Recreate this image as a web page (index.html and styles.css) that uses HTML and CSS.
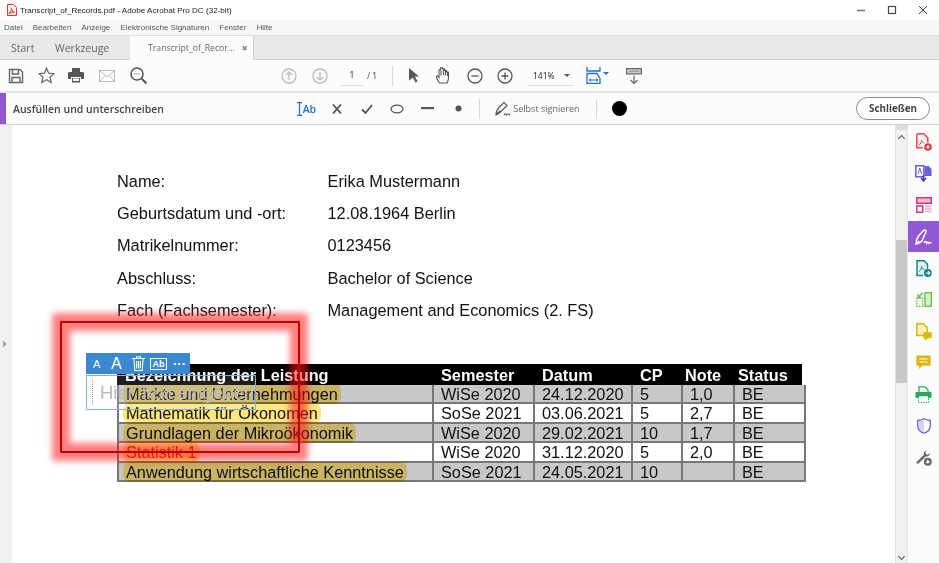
FILE: index.html
```html
<!DOCTYPE html>
<html lang="de">
<head>
    <meta charset="UTF-8">
    <title>Transcript_of_Records.pdf - Adobe Acrobat Pro DC (32-bit)</title>
    <link rel="stylesheet" href="styles.css">
</head>
<body>
    <div class="titlebar">
        <svg class="app-icon" width="11" height="12" viewBox="0 0 11 12"><path d="M1.500 .5h6l3 3v8h-9z" fill="#fdeeee" stroke="#e4342c"/><path d="M2.800 9.600c1.600-.8 2.600-3 2.600-5 .4 2 1.200 3 3 3.500-2 0-3.800.5-5.600 1.500z" fill="none" stroke="#e4342c"/></svg>
        <span class="title-text">Transcript_of_Records.pdf - Adobe Acrobat Pro DC (32-bit)</span>
        <div class="win-btns">
            <svg width="10" height="10" viewBox="0 0 10 10"><path d="M1 5.500h8" stroke="#777" stroke-width="1.500"/></svg>
            <svg width="10" height="10" viewBox="0 0 10 10"><rect x="1.500" y="1.500" width="7" height="7" fill="none" stroke="#444" stroke-width="1.200"/></svg>
            <svg width="10" height="10" viewBox="0 0 10 10"><path d="M1 1l8 8M9 1l-8 8" stroke="#444"/></svg>
        </div>
    </div>

    <div class="menubar">
        <span>Datei</span><span>Bearbeiten</span><span>Anzeige</span><span>Elektronische Signaturen</span><span>Fenster</span><span>Hilfe</span>
    </div>

    <div class="tabbar">
        <div class="tab">Start</div>
        <div class="tab tab-tools">Werkzeuge</div>
        <div class="tab tab-active">Transcript_of_Recor... <span class="tab-close">×</span></div>
    </div>

    <div class="toolbar">
        <div class="tool"><svg width="16" height="16" viewBox="0 0 16 16" fill="none" stroke="#666" stroke-width="1.400"><path d="M1.500 1.500h10.500l2.500 2.500v10.500h-13z"/><path d="M4.500 2v4h6v-4M4 14.500v-5h8v5"/></svg></div>
        <div class="tool"><svg width="17" height="17" viewBox="0 0 17 17" fill="none" stroke="#666" stroke-width="1.200"><path d="M8.500 1.200l2.200 5 5.300.5-4 3.500 1.200 5.300-4.700-2.800-4.700 2.800 1.200-5.300-4-3.500 5.300-.5z"/></svg></div>
        <div class="tool"><svg width="16" height="15" viewBox="0 0 16 15"><path d="M4 0h8v4h-8z" fill="#555"/><path d="M1.500 4h13c.8 0 1.500.7 1.500 1.500v5.500h-3v-2h-10v2h-3v-5.500c0-.8.7-1.500 1.500-1.500z" fill="#555"/><path d="M4 10h8v4.500h-8z" fill="#555"/><path d="M5 10.500h6v2.500h-6z" fill="#fff"/></svg></div>
        <div class="tool tool-mail"><svg width="16" height="12" viewBox="0 0 16 12" fill="none" stroke="#bbb"><rect x=".5" y=".5" width="15" height="11"/><path d="M1 1l7 6 7-6M1 11l5-5.500M15 11l-5-5.500"/></svg></div>
        <div class="tool tool-find"><svg width="17" height="17" viewBox="0 0 17 17" fill="none" stroke="#555" stroke-width="1.500"><circle cx="7" cy="7" r="6"/><path d="M11.500 11.500l5 5" stroke-width="2"/><path d="M4.500 7h1M6.500 7h1M8.500 7h1" stroke-width="1"/></svg></div>

        <div class="tool tool-first-nav"><svg width="16" height="16" viewBox="0 0 16 16" fill="none" stroke="#bbb" stroke-width="1.300"><circle cx="8" cy="8" r="7"/><path d="M8 12v-8M4.800 7l3.200-3.200 3.200 3.200"/></svg></div>
        <div class="tool tool-next-nav"><svg width="16" height="16" viewBox="0 0 16 16" fill="none" stroke="#bbb" stroke-width="1.300"><circle cx="8" cy="8" r="7"/><path d="M8 4v8M4.800 9l3.200 3.200 3.200-3.200"/></svg></div>
        <div class="page-input">1</div>
        <div class="page-total">/ 1</div>
        <div class="sep"></div>
        <div class="tool tool-pointer"><svg width="12" height="15" viewBox="0 0 12 15"><path d="M1 0l10 8.500h-4l2.500 5-2 1-2.500-5-4 3z" fill="#555"/></svg></div>
        <div class="tool"><svg width="16" height="17" viewBox="0 0 16 17" fill="none" stroke="#555" stroke-width="1.100"><path d="M3.500 16c-1-2-3-4-3-6s1.500-1 2.500.5v-7c0-1.200 1.500-1.200 1.500 0v-2c0-1.200 2-1.200 2 0v1c0-1.200 2-1.200 2 0v1.500c0-1.200 2-1.200 2 0v1.500c0-1 2-1 2 0v5.500c0 2-1 3.500-1.500 5z"/><path d="M5 3.500v5M7.500 2.500v5.500M9.500 3.500v5M11.500 5v4"/></svg></div>
        <div class="tool tool-minus"><svg width="16" height="16" viewBox="0 0 16 16" fill="none" stroke="#555" stroke-width="1.300"><circle cx="8" cy="8" r="7"/><path d="M4.500 8h7"/></svg></div>
        <div class="tool"><svg width="16" height="16" viewBox="0 0 16 16" fill="none" stroke="#555" stroke-width="1.300"><circle cx="8" cy="8" r="7"/><path d="M4.500 8h7M8 4.500v7"/></svg></div>
        <div class="zoom-select">141% <span class="caret"></span></div>
        <div class="tool tool-fit"><svg width="23" height="17" viewBox="0 0 23 17" fill="none" stroke="#1f73c9" stroke-width="1.300"><path d="M1 0v4h13v-4M1 6.500v10h13v-5l-3-5z"/><path d="M3 13h9M3 13l2-1.500M3 13l2 1.500M12 13l-2-1.500M12 13l-2 1.500" stroke-width="1"/><path d="M17 5h6l-3 3z" fill="#1f73c9" stroke="none"/></svg></div>
        <div class="tool tool-last"><svg width="16" height="16" viewBox="0 0 16 16" fill="none" stroke="#666" stroke-width="1.200"><rect x=".6" y=".6" width="14.800" height="5.300" fill="#ccc"/><path d="M3.500 3.200h9" stroke-dasharray="1 1"/><path d="M8 7.500v8M4.500 12l3.500 3.500 3.500-3.500"/></svg></div>
    </div>

    <div class="fillbar">
        <div class="fill-mark"></div>
        <div class="fill-title">Ausfüllen und unterschreiben</div>
        <div class="fill-tools">
            <div class="fill-tool fill-text"><svg width="5" height="14" viewBox="0 0 5 14" fill="none" stroke="#1f73c9" stroke-width="1.200"><path d="M0 .6h5M0 13.400h5M2.500 .6v12.800"/></svg><span>Ab</span></div>
            <div class="fill-tool"><svg width="10" height="10" viewBox="0 0 10 10"><path d="M1 .5l8 9M9 .5l-8 9" stroke="#555" stroke-width="1.800"/></svg></div>
            <div class="fill-tool"><svg width="12" height="10" viewBox="0 0 12 10"><path d="M1 5.500l3.500 3.500 6.500-8" fill="none" stroke="#555" stroke-width="1.800"/></svg></div>
            <div class="fill-tool"><svg width="14" height="10" viewBox="0 0 14 10"><ellipse cx="7" cy="5" rx="6" ry="3.900" fill="none" stroke="#555" stroke-width="1.200"/></svg></div>
            <div class="fill-tool"><svg width="13" height="3" viewBox="0 0 13 3"><rect width="13" height="2.200" fill="#555"/></svg></div>
            <div class="fill-tool"><svg width="7" height="7" viewBox="0 0 7 7"><circle cx="3.500" cy="3.500" r="3" fill="#555"/></svg></div>
        </div>
        <div class="sep sep-first"></div>
        <svg class="sign-icon" width="16" height="15" viewBox="0 0 16 15" fill="none" stroke="#555" stroke-width="1.100"><path d="M1 14c0-3 1.500-6 3-7.500l5-5 3 3-5 5c-1.500 1.500-3 3-6 4.500zM1 14l4-4"/><path d="M9 14c1-1.500 2-1.500 2.500 0 .5-1 2-1.500 3.500 0"/></svg>
        <span class="sign-label">Selbst signieren</span>
        <div class="sep sep-second"></div>
        <div class="color-dot"></div>
        <button class="close-btn">Schließen</button>
    </div>

    <div class="main">
        <div class="left-strip"><span class="strip-arrow"></span></div>

        <div class="doc">
            <div class="info-rows">
                <div class="info-row"><span class="info-key">Name:</span><span>Erika Mustermann</span></div>
                <div class="info-row"><span class="info-key">Geburtsdatum und -ort:</span><span>12.08.1964 Berlin</span></div>
                <div class="info-row"><span class="info-key">Matrikelnummer:</span><span>0123456</span></div>
                <div class="info-row"><span class="info-key">Abschluss:</span><span>Bachelor of Science</span></div>
                <div class="info-row"><span class="info-key">Fach (Fachsemester):</span><span>Management and Economics (2. FS)</span></div>
            </div>

            <div class="grades">
                <div class="grades-head">
                    <span>Bezeichnung der Leistung</span><span>Semester</span><span>Datum</span><span>CP</span><span class="note-h">Note</span><span class="status-h">Status</span>
                </div>
                <div class="grade-row shaded">
                    <span><mark>Märkte und Unternehmungen</mark></span><span>WiSe 2020</span><span>24.12.2020</span><span>5</span><span class="note">1,0</span><span class="status">BE</span>
                </div>
                <div class="grade-row">
                    <span><mark>Mathematik für Ökonomen</mark></span><span>SoSe 2021</span><span>03.06.2021</span><span>5</span><span class="note">2,7</span><span class="status">BE</span>
                </div>
                <div class="grade-row shaded">
                    <span><mark>Grundlagen der Mikroökonomik</mark></span><span>WiSe 2020</span><span>29.02.2021</span><span class="cp-wide">10</span><span class="note">1,7</span><span class="status">BE</span>
                </div>
                <div class="grade-row">
                    <span><mark class="failed">Statistik 1</mark></span><span>WiSe 2020</span><span>31.12.2020</span><span>5</span><span class="note">2,0</span><span class="status">BE</span>
                </div>
                <div class="grade-row shaded">
                    <span><mark>Anwendung wirtschaftliche Kenntnisse</mark></span><span>SoSe 2021</span><span>24.05.2021</span><span class="cp-wide">10</span><span class="note"></span><span class="status">BE</span>
                </div>
            </div>

            <!-- text field being edited, lies over the table -->
            <div class="field-bar">
                <span class="fb-small">A</span>
                <span class="fb-big">A</span>
                <svg class="fb-trash" width="13" height="15" viewBox="0 0 13 15" fill="none" stroke="#fff" stroke-width="1.100"><path d="M0 2.500h13M4.500 2.500v-1.800h4v1.800M2 3l.8 11.500h7.400l.8-11.500M4.700 5v7.500M6.500 5v7.500M8.300 5v7.500"/></svg>
                <span class="fb-ab">Ab</span>
                <span class="fb-more">···</span>
            </div>
            <div class="field-box">
                <span class="field-caret"></span>
                <span class="field-hint">Hier Text eingeben</span>
            </div>

            <div class="red-frame"></div>
        </div>

        <div class="scrollbar">
            <div class="sb-stub"></div>
            <div class="sb-up"></div>
            <div class="sb-thumb"></div>
            <div class="sb-down"></div>
        </div>

        <div class="tools-panel">
            <div class="panel-tool"><svg width="16" height="18" viewBox="0 0 16 18" fill="none" stroke="#d9534f" stroke-width="1.500"><path d="M.8 .8h7l4 4v5M.8 .8v14h6" fill="#fbe3e3"/><path d="M3 12c1.500-.8 2.500-3 2.500-5 .4 2 1 2.500 3 3" stroke-width="1"/><circle cx="12" cy="14" r="3.800" fill="#d9363e" stroke="none"/><path d="M12 12v4M10 14h4" stroke="#fff" stroke-width="1.200"/></svg></div>
            <div class="panel-tool"><svg width="17" height="17" viewBox="0 0 17 17"><path d="M.8 .8h8v11h-8z" fill="#fff" stroke="#6a5fe0" stroke-width="1.500"/><path d="M9.500 1h4l3 3v7h-7z" fill="#6a5fe0"/><path d="M3 9l1.800-6 1.800 6" fill="none" stroke="#6a5fe0"/><path d="M8.500 10v5.500M6 13l2.500 3 2.500-3" fill="none" stroke="#3f35c9" stroke-width="1.500"/></svg></div>
            <div class="panel-tool"><svg width="16" height="16" viewBox="0 0 16 16" fill="none" stroke="#d6337f" stroke-width="1.500"><rect x=".7" y=".7" width="14.600" height="5.600" fill="#f4b8d2"/><rect x=".7" y="9" width="6" height="6.300"/><path d="M9 9.500h6.500M9 12h6.500M9 14.500h6.500" stroke="#f0a8c8"/></svg></div>
            <div class="panel-tool panel-active"><svg width="18" height="16" viewBox="0 0 18 16" fill="none" stroke="#fff" stroke-width="1.500"><path d="M1 15c0-3 1-6 2.500-8l5-5.500c1-1 3-.2 2.500 1.300l-3.500 8c-1 2-3.500 3.500-6.500 4.200zM1 15l3-3"/><path d="M9 14c1-2 2-2 2.500 0 .5-1.500 1.500-1.500 2 0 .5-.8 1.500-.8 3 0"/></svg></div>
            <div class="panel-tool"><svg width="16" height="17" viewBox="0 0 16 17" fill="none" stroke="#17828c" stroke-width="1.500"><path d="M7 15.500h-6v-14.700h7l3.500 3.500v4.500" fill="#dff1f2"/><path d="M3 11.500c1.500-.8 2.500-3 2.500-5 .4 2 1 2.500 3 3" stroke-width="1"/><circle cx="11.800" cy="13" r="3.900" fill="#17828c" stroke="none"/><path d="M9.800 13h3.800M12 11.200l1.800 1.800-1.800 1.800" stroke="#fff" stroke-width="1.100"/></svg></div>
            <div class="panel-tool"><svg width="16" height="15" viewBox="0 0 16 15" fill="none" stroke="#6cc24a" stroke-width="1.400"><rect x="9" y=".7" width="6.300" height="13.600" fill="#d7efc9"/><path d="M.7 6.500h6v7.800h-6z" stroke-dasharray="1.500 1.200"/><path d="M7 .8l-5 4.500M2 2v3.500h3.500"/></svg></div>
            <div class="panel-tool"><svg width="16" height="17" viewBox="0 0 16 17" fill="none" stroke="#dcb712" stroke-width="1.500"><path d="M.8 .8h6.500l4 4v7.700h-10.500z" fill="#f7eebb"/><rect x="8" y="10" width="7" height="4.500" fill="#dcb712"/><path d="M9.500 14.500v2l2-2" fill="#dcb712"/></svg></div>
            <div class="panel-tool"><svg width="15" height="15" viewBox="0 0 15 15"><path d="M1 .5h13c.4 0 .7 .3 .7 .7v8.800c0 .4-.3 .7-.7 .7h-8l-3 3.500v-3.500h-2c-.4 0-.7-.3-.7-.7v-8.800c0-.4 .3-.7 .7-.7z" fill="#dcb712"/><path d="M3.500 4h8M3.500 7h8" stroke="#fff" stroke-width="1.200"/></svg></div>
            <div class="panel-tool"><svg width="17" height="17" viewBox="0 0 17 17"><path d="M4 .8h6l3 3v3.500h-9z" fill="#fff" stroke="#24a85a" stroke-width="1.300"/><rect x=".5" y="6" width="16" height="6" rx="1" fill="#24a85a"/><rect x="3.500" y="10" width="10" height="6.300" fill="#fff" stroke="#24a85a" stroke-dasharray="1.500 1"/></svg></div>
            <div class="panel-tool"><svg width="14" height="16" viewBox="0 0 14 16" stroke="#5f57e3" stroke-width="1.300"><path d="M7 .8c2 1.200 4 1.700 6.200 1.700v5.500c0 3.500-2.800 6-6.200 7.200-3.400-1.200-6.200-3.700-6.200-7.200v-5.500c2.200 0 4.200-.5 6.200-1.700z" fill="#fff"/><path d="M7 1.500v13c-3-1.200-5.500-3.500-5.500-6.500v-4.800c2 0 3.700-.5 5.500-1.700z" fill="#d5d3f7" stroke="none"/></svg></div>
            <div class="panel-tool"><svg width="16" height="16" viewBox="0 0 16 16"><path d="M11 .5c-2.200 0-3.800 2-3 4.200l-7.200 7c-1 1 .6 2.700 1.700 1.700l7.200-7c2.200 .8 4.300-1 4.100-3.400l-2.100 1.700-2-.6-.3-2z" fill="#666"/><circle cx="11.800" cy="11.800" r="4" fill="#666"/><path d="M11.800 9.800v4M9.800 11.800h4" stroke="#fff" stroke-width="1.200"/></svg></div>
        </div>
    </div>
</body>
</html>
```

FILE: styles.css
```css
* {
    box-sizing: border-box;
}

html, body {
    margin: 0;
    height: 100%;
}

body {
    width: 939px;
    height: 563px;
    overflow: hidden;
    display: flex;
    flex-direction: column;
    font-family: "Noto Sans", sans-serif;
    color: #333;
    background: #fff;
}

svg {
    display: block;
    flex: none;
}

/* window chrome */
.titlebar {
    height: 20px;
    display: flex;
    align-items: center;
    padding-left: 6px;
    background: #fff;
    font-family: "Liberation Sans", sans-serif;
    font-size: 8.100px;
    color: #222;
}

.app-icon {
    margin-right: 3px;
}

.win-btns {
    margin-left: auto;
    display: flex;
    gap: 21px;
    padding-right: 11px;
    margin-top: -1px;
}

.menubar {
    height: 15px;
    display: flex;
    align-items: center;
    gap: 10px;
    padding-left: 4px;
    background: #f8f8f8;
    font-family: "Liberation Sans", sans-serif;
    font-size: 8px;
    color: #555;
}

.tabbar {
    height: 25px;
    display: flex;
    background: #e8e8e8;
    border-top: 1px solid #dcdcdc;
    border-bottom: 1px solid #d2d2d2;
    font-family: "Open Sans", sans-serif;
    font-size: 10.500px;
    color: #666;
}

.tab {
    display: flex;
    align-items: center;
    padding-left: 11px;
    width: 44px;
}

.tab-tools {
    padding-left: 11px;
    width: 86px;
}

.tab-active {
    width: 124px;
    margin-bottom: -1px;
    padding-left: 18px;
    background: #fcfcfc;
    border-right: 1px solid #d2d2d2;
    font-size: 8.700px;
}

.tab-close {
    margin-left: 7px;
    font-weight: 700;
    font-size: 10px;
}

.toolbar {
    height: 33px;
    display: flex;
    align-items: center;
    padding-left: 1px;
    background: #fcfcfc;
    border-bottom: 2px solid #e4e4e4;
}

.tool {
    width: 30px;
    height: 30px;
    display: flex;
    align-items: center;
    justify-content: center;
}

.tool-mail,
.tool-find,
.tool-next-nav,
.tool-minus {
    margin-left: 1px;
}

.tool-first-nav {
    margin-left: 121px;
}

.page-input {
    width: 22px;
    margin-left: 6px;
    height: 20px;
    line-height: 17px;
    text-align: center;
    font-size: 8.500px;
    border-bottom: 1px solid #ddd;
}

.page-total {
    margin-left: 4px;
    width: 25px;
    font-size: 8.500px;
    color: #555;
}

.sep {
    width: 1px;
    height: 20px;
    background: #d8d8d8;
}

.tool-pointer {
    margin-left: 6px;
}

.zoom-select {
    width: 47px;
    height: 20px;
    line-height: 17px;
    margin-left: 7px;
    padding-left: 6px;
    font-size: 8.500px;
    border-bottom: 1px solid #ddd;
    display: flex;
    align-items: center;
    gap: 9px;
}

.caret {
    border: 3px solid transparent;
    border-top-color: #555;
    margin-top: 3px;
}

.tool-fit {
    margin-left: 6px;
    padding-left: 4px;
}

.tool-last {
    margin-left: 9px;
}

/* fill & sign bar */
.fillbar {
    height: 32px;
    display: flex;
    align-items: center;
    background: #fcfcfc;
    border-bottom: 1px solid #d2d2d2;
}

.fill-mark {
    width: 6px;
    height: 100%;
    background: #9257d3;
}

.fill-title {
    width: 278px;
    margin-left: 7px;
    font-family: "Open Sans", sans-serif;
    font-weight: 600;
    font-size: 10.500px;
    color: #444;
}

.fill-tools {
    display: flex;
    align-items: center;
}

.fill-tool {
    width: 30.400px;
    display: flex;
    align-items: center;
    justify-content: center;
}

.fill-text {
    gap: 1px;
    font-family: "Open Sans", sans-serif;
    font-weight: 600;
    font-size: 10.500px;
    letter-spacing: -0.3px;
    color: #1f73c9;
}

.sep-first {
    margin-left: 6px;
}

.sign-icon {
    margin-left: 15px;
}

.sign-label {
    margin-left: 2px;
    width: 67px;
    white-space: nowrap;
    font-family: "Open Sans", sans-serif;
    font-size: 9px;
    color: #666;
}

.sep-second {
    margin-left: 16px;
}

.color-dot {
    width: 15px;
    height: 15px;
    margin-left: 15px;
    border-radius: 50%;
    background: #000;
}

.close-btn {
    width: 74px;
    height: 23px;
    margin-left: auto;
    margin-right: 9px;
    padding: 0;
    border: 1px solid #888;
    border-radius: 12px;
    background: #fff;
    font-family: "Open Sans", sans-serif;
    font-weight: 700;
    font-size: 9.800px;
    color: #444;
}

/* document area */
.main {
    flex: 1;
    display: flex;
    min-height: 0;
}

.left-strip {
    width: 12px;
    background: #f0f0f0;
    display: flex;
    align-items: center;
    padding-left: 3px;
    padding-bottom: 1px;
}

.strip-arrow {
    border: 4px solid transparent;
    border-left-color: #aaa;
    border-right-width: 0;
    margin-top: 1px;
}

.doc {
    flex: 1;
    position: relative;
    padding: 40.200px 0 0 105px;
    background: #fff;
    font-family: "Liberation Sans", sans-serif;
    color: #111;
}

.info-row {
    height: 32.250px;
    display: flex;
    align-items: center;
    font-size: 16.350px;
}

.info-key {
    width: 210.500px;
}

.grades {
    margin-top: 37.300px;
    width: 689px;
    font-size: 16.300px;
}

.grades-head,
.grade-row {
    display: grid;
    grid-template-columns: 315px 101px 98px 50px 52px 73px;
}

.grades-head {
    width: 685px;
    height: 21px;
    background: #000;
    color: #fff;
    font-weight: 700;
    line-height: 22px;
}

.grades-head span {
    padding-left: 8px;
}

.grades-head span:nth-child(2),
.grades-head span:nth-child(3),
.grades-head span:nth-child(4) {
    padding-left: 9px;
}

.grades-head .note-h {
    margin-left: 4px;
    padding-left: 0;
    white-space: nowrap;
}

.grades-head .status-h {
    padding-left: 5px;
}

.grade-row {
    height: 19.500px;
    line-height: 18px;
    border-left: 2px solid #777;
    border-right: 2px solid #777;
    border-bottom: 2px solid #777;
    background: #fff;
}

.grade-row > span {
    padding-left: 7px;
    border-right: 2px solid #777;
    white-space: nowrap;
}

.grade-row > span:last-child {
    border-right: 0;
}

.grade-row > span:first-child {
    padding-left: 5px;
}

.shaded {
    background: #c8c8c8;
}

mark {
    padding: 1px 3px;
    margin-left: -1px;
    border-radius: 7px;
    background: #ffe680;
    mix-blend-mode: multiply;
    color: #111;
}

mark.failed {
    color: #c01818;
}

/* overlays on the page */
.field-bar {
    position: absolute;
    left: 74px;
    top: 228px;
    width: 104px;
    height: 21px;
    display: flex;
    align-items: center;
    padding-left: 7px;
    background: #3a87d2;
    color: #fff;
}

.fb-small {
    font-size: 11px;
    width: 13px;
}

.fb-big {
    font-size: 16px;
    width: 22px;
    padding-left: 5px;
}

.fb-trash {
    margin-left: 4px;
}

.fb-ab {
    margin-left: 5px;
    width: 17px;
    height: 12px;
    border: 1px solid #fff;
    font-size: 9px;
    font-weight: 700;
    line-height: 10px;
    text-align: center;
}

.fb-more {
    margin-left: 6px;
    font-weight: 700;
    font-size: 13px;
}

.field-box {
    position: absolute;
    left: 74px;
    top: 250px;
    width: 170px;
    height: 35px;
    display: flex;
    align-items: center;
    border: 1px solid #7fb2e5;
    background: rgba(255, 255, 255, 0.12);
}

.field-caret {
    width: 1px;
    height: 25px;
    margin-left: 5px;
    border-left: 1px dotted #999;
}

.field-hint {
    margin-left: 7px;
    font-size: 18.500px;
    color: #b9b9b9;
    white-space: nowrap;
    overflow: hidden;
}

.red-frame {
    position: absolute;
    left: 48px;
    top: 196px;
    width: 240px;
    height: 132px;
    border: 2px solid #c00000;
    border-radius: 1px;
    box-shadow: 0 0 6px 8px rgba(255, 20, 20, 0.55), inset 0 0 6px 8px rgba(255, 20, 20, 0.55);
}

/* scrollbar */
.scrollbar {
    width: 12px;
    background: #f0f0f0;
    border-left: 1px solid #e0e0e0;
    position: relative;
}

.sb-stub {
    height: 5px;
    background: #ddd;
}

.sb-up,
.sb-down {
    position: absolute;
    left: 3px;
    width: 5px;
    height: 5px;
    border-left: 1.500px solid #555;
    border-top: 1.500px solid #555;
}

.sb-up {
    top: 11px;
    transform: rotate(45deg);
}

.sb-down {
    bottom: 4px;
    transform: rotate(225deg);
}

.sb-thumb {
    position: absolute;
    top: 115px;
    left: 0;
    right: 0;
    height: 143px;
    background: #c8c8c8;
}

/* right tools panel */
.tools-panel {
    width: 32px;
    border-left: 1px solid #e6e6e6;
    background: #fcfcfc;
    padding-top: 1px;
}

.panel-tool {
    height: 31.600px;
    display: flex;
    align-items: center;
    justify-content: center;
}

.panel-active {
    background: #9257d3;
}
```
